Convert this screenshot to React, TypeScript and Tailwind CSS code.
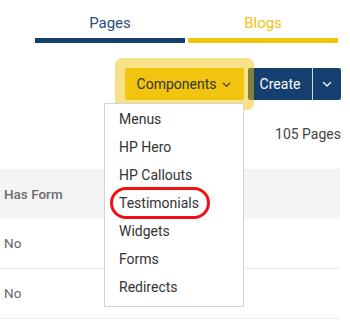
const MENU = ['Menus', 'HP Hero', 'HP Callouts', 'Testimonials', 'Widgets', 'Forms', 'Redirects'];

function Chevron({ className }: { className?: string }) {
  return (
    <svg className={className} viewBox="0 0 12 12" fill="none" stroke="currentColor" strokeWidth="1.3" strokeLinecap="round" strokeLinejoin="round">
      <path d="M2.5 4.5 6 8l3.5-3.5" />
    </svg>
  );
}

export default function App() {
  return (
    <div className="w-[350px] h-[326px] overflow-hidden bg-white font-['Roboto',sans-serif] text-[#333]">
      {/* Tabs */}
      <div className="flex gap-[3px] pl-[35px] pt-[8px]">
        <div className="w-[150px] flex flex-col items-center">
          <span className="text-[15px] leading-[30px] text-[#2a4d7a]">Pages</span>
          <div className="w-full h-[5px] bg-[#143f6e]" />
        </div>
        <div className="w-[150px] flex flex-col items-center">
          <span className="text-[15px] leading-[30px] text-[#f1c40f]">Blogs</span>
          <div className="w-full h-[5px] bg-[#f1c40f]" />
        </div>
      </div>

      {/* Toolbar */}
      <div className="flex justify-end pr-[9px] mt-[25px] gap-[4px]">
        <div className="relative z-10">
          <button className="h-[32px] w-[119px] flex items-center justify-center gap-[5px] bg-[#f1c40f] rounded-[2px] text-[14px] text-[#333] shadow-[0_0_0_10px_rgba(241,196,15,0.5)]">
            Components
            <Chevron className="w-[11px] h-[11px]" />
          </button>
          {/* Dropdown */}
          <div className="absolute z-20 left-[-21px] top-[35px] w-[140px] bg-white border border-[#d4d4d4] pt-[1px] pb-[5px]">
            {MENU.map(m => (
              <div key={m} className="relative h-[28px] flex items-center pl-[14px] text-[14px] text-[#333]">
                {m}
                {m === 'Testimonials' && (
                  <span className="absolute left-[5px] top-[-2px] w-[100px] h-[32px] rounded-full border-[3px] border-[#f01010]" />
                )}
              </div>
            ))}
          </div>
        </div>
        <div className="flex h-[32px] bg-[#143f6e] rounded-[2px] text-white">
          <button className="w-[65px] text-[14px] border-r border-white/80">Create</button>
          <button className="w-[28px] flex items-center justify-center">
            <Chevron className="w-[12px] h-[12px]" />
          </button>
        </div>
      </div>

      {/* Count */}
      <div className="flex justify-end pr-[9px] mt-[22px] text-[14px] text-[#444] leading-[24px]">105 Pages</div>

      {/* Table */}
      <div className="w-[340px] mt-[23px]">
        <div className="h-[50px] bg-[#f4f4f4] flex items-center pl-[4px] text-[13.5px] font-medium text-[#6b6b6b]">Has Form</div>
        <div className="h-[50px] border-b border-[#ececec] flex items-center pl-[4px] text-[13.5px] text-[#666]">No</div>
        <div className="h-[50px] border-b border-[#ececec] flex items-center pl-[4px] text-[13.5px] text-[#666]">No</div>
      </div>
    </div>
  );
}
